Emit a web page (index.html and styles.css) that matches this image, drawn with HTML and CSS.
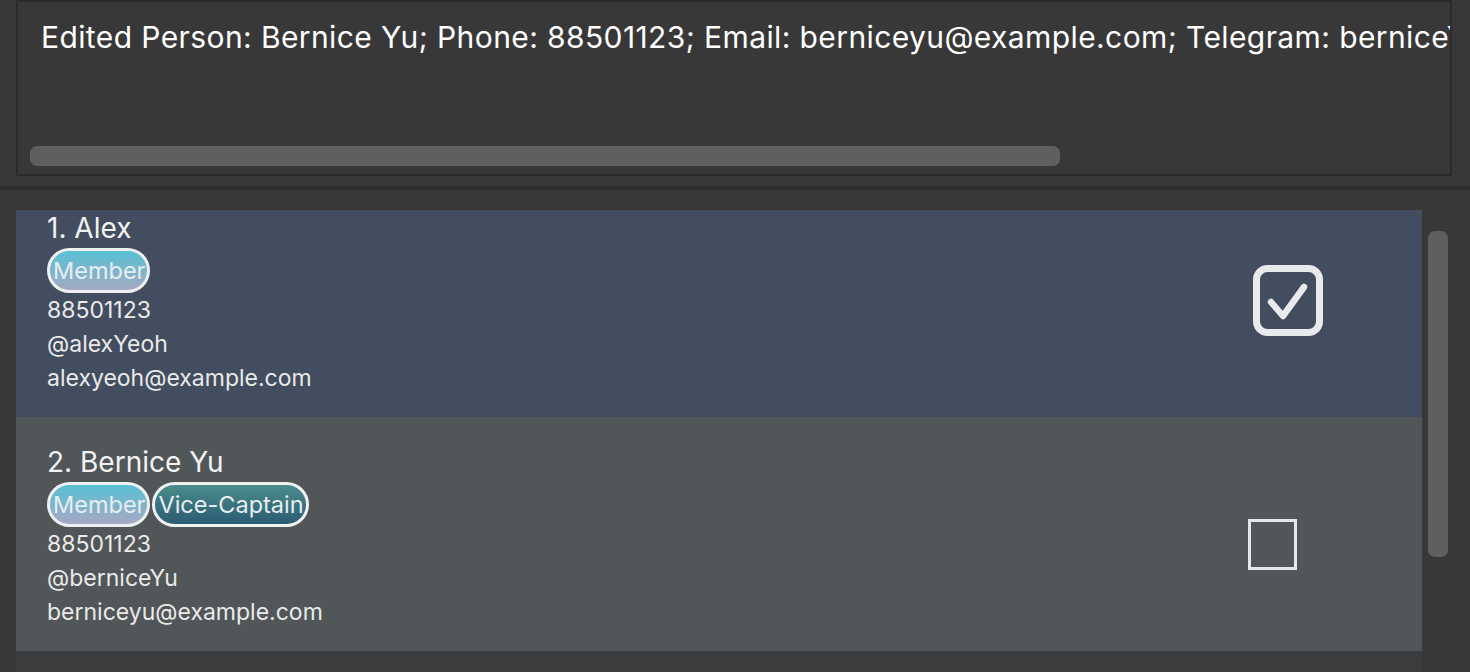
FILE: index.html
```html
<!DOCTYPE html>
<html>
<head>
<meta charset="utf-8">
<link rel="stylesheet" href="styles.css">
</head>
<body>
<div class="app">
  <div class="result-pane">
    <div class="result-box">
      <div class="result-text">Edited Person: Bernice Yu; Phone: 88501123; Email: berniceyu@example.com; Telegram: berniceYu; Tags: [Member][Vice-Captain]</div>
      <div class="hscroll"></div>
    </div>
  </div>
  <div class="separator"></div>
  <div class="list-pane">
    <div class="list-viewport">
      <div class="list-inner">
        <div class="card card-selected">
          <div class="card-info">
            <div class="name">1. Alex</div>
            <div class="tags">
              <span class="tag tag-member">Member</span>
            </div>
            <div class="detail">88501123</div>
            <div class="detail">@alexYeoh</div>
            <div class="detail">alexyeoh@example.com</div>
          </div>
          <div class="check-wrap check-on">
            <svg width="70" height="71" viewBox="0 0 70 71">
              <rect x="3.5" y="3.5" width="63" height="64" rx="11" fill="none" stroke="#e9eaed" stroke-width="7"/>
              <polyline points="18,37 30,51 51,22" fill="none" stroke="#e9eaed" stroke-width="6.5" stroke-linecap="round" stroke-linejoin="round"/>
            </svg>
          </div>
        </div>
        <div class="card card-plain">
          <div class="card-info">
            <div class="name">2. Bernice Yu</div>
            <div class="tags">
              <span class="tag tag-member">Member</span>
              <span class="tag tag-vice">Vice-Captain</span>
            </div>
            <div class="detail">88501123</div>
            <div class="detail">@berniceYu</div>
            <div class="detail">berniceyu@example.com</div>
          </div>
          <div class="check-wrap check-off">
            <div class="box-empty"></div>
          </div>
        </div>
      </div>
    </div>
    <div class="vscroll-track">
      <div class="vscroll-thumb"></div>
    </div>
  </div>
</div>
</body>
</html>
```

FILE: styles.css
```css
* { box-sizing: border-box; }
html, body {
  margin: 0;
  padding: 0;
  background: #383838;
  font-family: Inter, "Noto Sans", "Liberation Sans", sans-serif;
  overflow: hidden;
}
.app {
  width: 1470px;
  height: 672px;
  display: flex;
  flex-direction: column;
}
.result-pane {
  height: 186px;
  padding: 0 18px 10px 16px;
  flex: none;
}
.result-box {
  position: relative;
  height: 176px;
  border: 2px solid #2b2b2b;
  background: #383838;
  overflow: hidden;
}
.result-text {
  color: #ffffff;
  font-size: 30px;
  letter-spacing: 0.4px;
  line-height: 36px;
  padding: 17px 0 0 23px;
  white-space: nowrap;
}
.hscroll {
  position: absolute;
  left: 12px;
  top: 144px;
  width: 1030px;
  height: 20px;
  border-radius: 7px;
  background: #5f5f5f;
}
.separator {
  height: 4px;
  background: #2b2b2b;
  flex: none;
}
.list-pane {
  flex: 1;
  display: flex;
  padding: 20px 0 0 16px;
  min-height: 0;
}
.list-viewport {
  width: 1406px;
  overflow: hidden;
  background: #3b3c3d;
}
.list-inner {
  margin-top: -27px;
}
.card {
  height: 234px;
  display: flex;
  justify-content: space-between;
  align-items: center;
}
.card-selected { background: #424d5f; }
.card-plain { background: #515658; }
.card-info {
  align-self: stretch;
  padding: 28px 0 0 31px;
}
.name {
  color: #f2f2f2;
  font-size: 28px;
  line-height: 34px;
  margin-bottom: 3px;
}
.tags {
  display: flex;
  gap: 2px;
  height: 45px;
}
.tag {
  display: inline-block;
  height: 45px;
  border: 3px solid #eef0f2;
  border-radius: 23px;
  padding: 0 2px 0 3px;
  font-size: 23.5px;
  line-height: 39px;
  color: #e6eef2;
}
.tag-member {
  background: linear-gradient(#58c0d3, #a5a9c3);
}
.tag-vice {
  background: linear-gradient(#4c8d8c, #2a5b73);
}
.detail {
  color: #eaeaea;
  font-size: 23px;
  line-height: 34px;
}
.check-wrap { display: flex; }
.check-on {
  margin-right: 99px;
}
.check-on svg { display: block; }
.check-off {
  margin-right: 125px;
  margin-top: 20px;
}
.box-empty {
  width: 49px;
  height: 51px;
  border: 3px solid #e6e7e7;
}
.vscroll-track {
  width: 32px;
  padding: 21px 0 0 6px;
}
.vscroll-thumb {
  width: 20px;
  height: 326px;
  border-radius: 7px;
  background: #5f5f5f;
}
```
